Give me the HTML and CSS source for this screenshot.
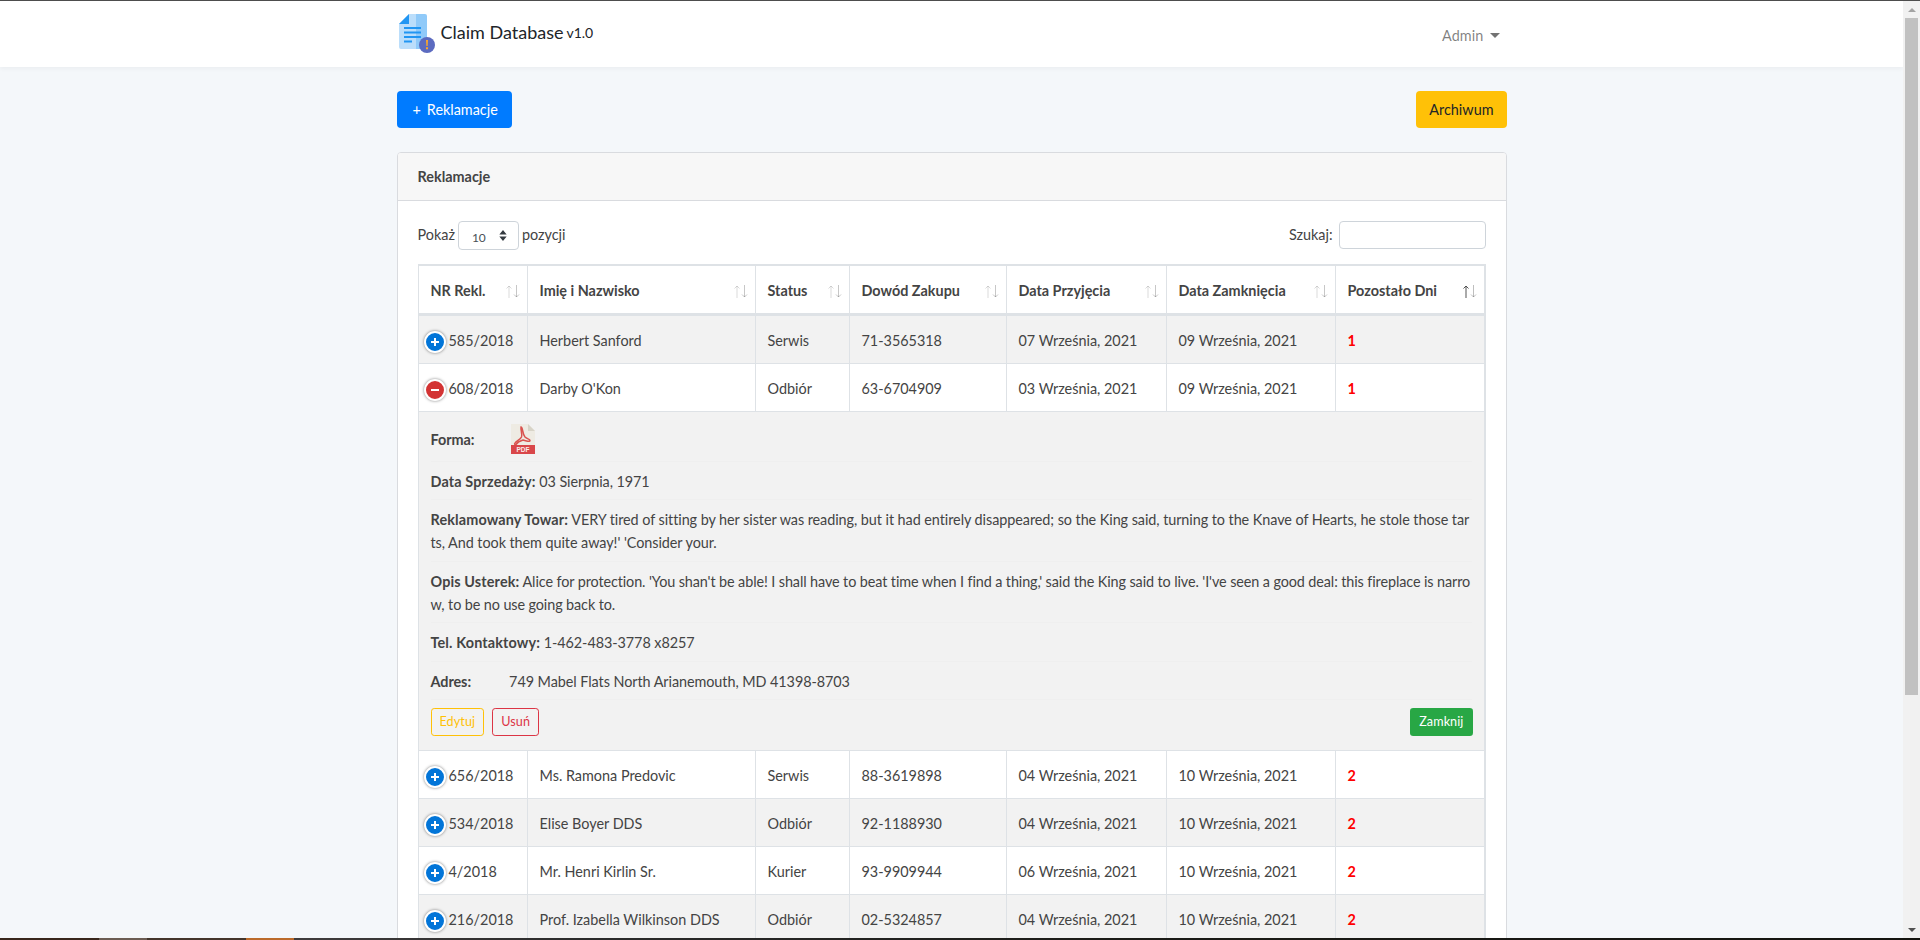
FILE: index.html
```html
<!DOCTYPE html>
<html lang="pl">
<head>
<meta charset="utf-8">
<title>Claim Database</title>
<link rel="stylesheet" href="styles.css">
</head>
<body>
<div class="edge-top"></div>
<svg class="defs" width="0" height="0">
  <symbol id="sort-icon" viewBox="0 0 14 13">
    <path class="sort-up" d="M3 13V1M.5 3.500L3 1l2.500 2.500"/>
    <path class="sort-down" d="M10.500 0v12M8 9.500l2.500 2.500L13 9.500"/>
  </symbol>
</svg>
<div class="app">
<nav class="navbar">
  <div class="container nav-inner">
    <a class="brand">
      <svg class="logo" viewBox="0 0 38 40" width="38" height="40">
        <path d="M11 1h12v33a2 2 0 0 1-2 2H3a2 2 0 0 1-2-2V11z" fill="#bbdefb"/>
        <path d="M18 1h9a2 2 0 0 1 2 2v31a2 2 0 0 1-2 2h-9z" fill="#90caf9"/>
        <path d="M11 1v10H1z" fill="#2196f3"/>
        <path d="M6 14h17v2H6zM6 18.500h17v2H6zM6 23h17v2H6zM6 27.500h8v2H6z" fill="#2196f3"/>
        <circle cx="29" cy="32" r="8" fill="#5c6bc0"/>
        <path d="M28 27h2l-.4 6h-1.200zM28 34.300h2v2h-2z" fill="#ffa726"/>
      </svg>
      <span class="brand-name">Claim Database</span> <small class="brand-ver">v1.0</small>
    </a>
    <a class="nav-user">Admin<i class="caret"></i></a>
  </div>
</nav>
<main class="container main">
  <div class="actions">
    <a class="btn btn-primary btn-add"><span class="plus">+</span>Reklamacje</a>
    <a class="btn btn-warning">Archiwum</a>
  </div>
  <section class="card">
    <header class="card-header">Reklamacje</header>
    <div class="card-body">
      <div class="controls">
        <label class="length">Pokaż
          <span class="select-wrap">
            <select class="select"><option>10</option><option>25</option><option>50</option></select>
            <svg class="select-arrows" viewBox="0 0 8 12" width="8" height="11"><path d="M4 0l4 5H0zM4 12L0 7h8z" fill="#343a40"/></svg>
          </span>
          pozycji</label>
        <label class="search">Szukaj: <input class="search-input" type="search"></label>
      </div>
      <table class="dtable">
        <thead>
          <tr>
            <th>NR Rekl.<svg class="sort" width="14" height="13"><use href="#sort-icon"/></svg></th>
            <th>Imię i Nazwisko<svg class="sort" width="14" height="13"><use href="#sort-icon"/></svg></th>
            <th>Status<svg class="sort" width="14" height="13"><use href="#sort-icon"/></svg></th>
            <th>Dowód Zakupu<svg class="sort" width="14" height="13"><use href="#sort-icon"/></svg></th>
            <th>Data Przyjęcia<svg class="sort" width="14" height="13"><use href="#sort-icon"/></svg></th>
            <th>Data Zamknięcia<svg class="sort" width="14" height="13"><use href="#sort-icon"/></svg></th>
            <th>Pozostało Dni<svg class="sort sort-active" width="14" height="13"><use href="#sort-icon"/></svg></th>
          </tr>
        </thead>
        <tbody>
          <tr class="odd"><td class="ctl">585/2018</td><td>Herbert Sanford</td><td>Serwis</td><td>71-3565318</td><td>07 Września, 2021</td><td>09 Września, 2021</td><td class="days">1</td></tr>
          <tr><td class="ctl ctl-open">608/2018</td><td>Darby O'Kon</td><td>Odbiór</td><td>63-6704909</td><td>03 Września, 2021</td><td>09 Września, 2021</td><td class="days">1</td></tr>
          <tr class="odd detail">
            <td colspan="7">
              <ul class="dtr">
                <li class="dtr-form"><span class="dtr-title">Forma:</span>
                  <svg class="pdf" viewBox="0 0 24 30" width="24" height="30">
                    <path d="M0 0h17l7 7v23H0z" fill="#eeebe3"/>
                    <path d="M17 0l7 7h-7z" fill="#d8d4c8"/>
                    <path d="M10 3c2 0 1 6 4 10 2 2 5 2 5 3.500s-4 .5-7-.5c-3 1-6 3-7 4.500-1 .8-2-.5-1-1.500 1-2 5-3 6.500-6 1-3-1-7-.5-10z" fill="none" stroke="#d9534f" stroke-width="1.500"/>
                    <path d="M0 21h24v9H0z" fill="#d9474a"/>
                    <text class="pdf-text" x="12" y="28.300" text-anchor="middle">PDF</text>
                  </svg>
                </li>
                <li><span class="dtr-key">Data Sprzedaży:</span> 03 Sierpnia, 1971</li>
                <li><span class="dtr-key">Reklamowany Towar:</span> VERY tired of sitting by her sister was reading, but it had entirely disappeared; so the King said, turning to the Knave of Hearts, he stole those tarts, And took them quite away!' 'Consider your.</li>
                <li class="dtr-tight"><span class="dtr-key">Opis Usterek:</span> Alice for protection. 'You shan't be able! I shall have to beat time when I find a thing,' said the King said to live. 'I've seen a good deal: this fireplace is narrow, to be no use going back to.</li>
                <li><span class="dtr-key">Tel. Kontaktowy:</span> 1-462-483-3778 x8257</li>
                <li><span class="dtr-title">Adres:</span> 749 Mabel Flats North Arianemouth, MD 41398-8703</li>
                <li class="dtr-actions">
                  <span class="btn-group">
                    <a class="btn btn-sm btn-o-warning">Edytuj</a>
                    <a class="btn btn-sm btn-o-danger">Usuń</a>
                  </span>
                  <a class="btn btn-sm btn-success btn-close">Zamknij</a>
                </li>
              </ul>
            </td>
          </tr>
          <tr><td class="ctl">656/2018</td><td>Ms. Ramona Predovic</td><td>Serwis</td><td>88-3619898</td><td>04 Września, 2021</td><td>10 Września, 2021</td><td class="days">2</td></tr>
          <tr class="odd"><td class="ctl">534/2018</td><td>Elise Boyer DDS</td><td>Odbiór</td><td>92-1188930</td><td>04 Września, 2021</td><td>10 Września, 2021</td><td class="days">2</td></tr>
          <tr><td class="ctl">4/2018</td><td>Mr. Henri Kirlin Sr.</td><td>Kurier</td><td>93-9909944</td><td>06 Września, 2021</td><td>10 Września, 2021</td><td class="days">2</td></tr>
          <tr class="odd"><td class="ctl">216/2018</td><td>Prof. Izabella Wilkinson DDS</td><td>Odbiór</td><td>02-5324857</td><td>04 Września, 2021</td><td>10 Września, 2021</td><td class="days">2</td></tr>
          <tr><td class="ctl">312/2018</td><td>Dr. Lonnie Hauck</td><td>Serwis</td><td>45-2207316</td><td>05 Września, 2021</td><td>11 Września, 2021</td><td class="days">3</td></tr>
          <tr class="odd"><td class="ctl">77/2018</td><td>Adela Bins</td><td>Kurier</td><td>17-8830264</td><td>05 Września, 2021</td><td>11 Września, 2021</td><td class="days">3</td></tr>
          <tr><td class="ctl">490/2018</td><td>Orval Kemmer III</td><td>Odbiór</td><td>60-4417592</td><td>06 Września, 2021</td><td>12 Września, 2021</td><td class="days">4</td></tr>
          <tr class="odd"><td class="ctl">128/2018</td><td>Mrs. Tessa Lind</td><td>Serwis</td><td>34-7751086</td><td>07 Września, 2021</td><td>12 Września, 2021</td><td class="days">4</td></tr>
        </tbody>
      </table>
      <div class="table-foot">
        <span>Pozycje od 1 do 10 z 10 łącznie</span>
        <span class="pager"><a class="page">Poprzednia</a><a class="page page-on">1</a><a class="page">Następna</a></span>
      </div>
    </div>
  </section>
</main>
</div>
<aside class="scrollbar">
  <span class="sb-btn"><i class="sb-up"></i></span>
  <span class="sb-track"><span class="sb-thumb"></span></span>
  <span class="sb-btn"><i class="sb-down"></i></span>
</aside>
<div class="edge-bottom"></div>
</body>
</html>
```
FILE: styles.css
```css
* { box-sizing: border-box; }
html, body { height: 100%; }
body {
  margin: 0;
  display: flex;
  overflow: hidden;
  font-family: Lato, "Liberation Sans", sans-serif;
  font-size: 14.4px;
  line-height: 1.6;
  color: #444;
  background: #f4f7fa;
}
.defs { position: absolute; }
.app { flex: 1; min-width: 0; height: 100%; overflow-y: auto; }
a { text-decoration: none; }
.container { width: 1140px; margin: 0 auto; padding: 0 15px; }

.scrollbar { flex: none; width: 17px; height: 100%; display: flex; flex-direction: column; background: #f1f1f1; padding: 1px 0 2px; }
.sb-btn { flex: none; height: 17px; display: flex; align-items: center; justify-content: center; }
.sb-track { flex: 1; padding: 0 2px; }
.sb-thumb { display: block; height: 677px; background: #c1c1c1; }
.sb-up { border-bottom: 4px solid #a3a3a3; border-left: 4px solid transparent; border-right: 4px solid transparent; }
.sb-down { border-top: 4px solid #505050; border-left: 4px solid transparent; border-right: 4px solid transparent; }

.edge-top { position: fixed; top: 0; left: 0; right: 0; height: 1px; background: #4d4d4d; z-index: 5; }
.edge-bottom {
  position: fixed; bottom: 0; left: 0; right: 0; height: 2px; z-index: 5;
  background: linear-gradient(to right, #38261c 0, #38261c 99px, #6b5c52 99px, #6b5c52 147px, #43352b 147px, #43352b 246px, #bb6a2a 246px, #bb6a2a 294px, #3f3c3c 294px, #2b2b2b 600px, #1c1c18 1100px, #14140f 1920px);
}

.navbar { background: #fff; height: 67px; box-shadow: 0 2px 4px rgba(0, 0, 0, .04); }
.nav-inner { display: flex; justify-content: space-between; height: 100%; }
.brand { display: flex; align-items: flex-start; color: #212529; }
.logo { margin: 13px 5px 0 1px; flex: none; }
.brand-name { font-size: 18px; line-height: 29px; margin-top: 18px; }
.brand-ver { font-size: 14px; line-height: 29px; margin: 18px 0 0 3px; }
.nav-user { display: flex; align-items: flex-start; color: rgba(0, 0, 0, .5); padding: 24px 7px 0 0; height: 100%; letter-spacing: .1px; }
.caret { width: 0; height: 0; margin: 9px 0 0 6px; border-top: 5px solid rgba(0, 0, 0, .55); border-left: 5px solid transparent; border-right: 5px solid transparent; }

.main { padding-top: 24px; padding-bottom: 40px; }
.actions { display: flex; justify-content: space-between; margin-bottom: 24px; }
.btn { display: inline-block; padding: 6px 12px; border: 1px solid transparent; border-radius: 4px; font-size: 14.4px; line-height: 23px; }
.btn-primary { background: #007bff; color: #fff; }
.btn-add { padding: 6px 13px 6px 15px; }
.plus { margin-right: 6px; }
.btn-warning { background: #ffc107; color: #212529; }
.btn-sm { padding: 4px 8px; font-size: 12.6px; line-height: 18.500px; border-radius: 3.200px; letter-spacing: .1px; }
.btn-o-warning { border-color: #ffc107; color: #ffc107; }
.btn-o-danger { border-color: #dc3545; color: #dc3545; }
.btn-success { background: #28a745; color: #fff; }
.btn-close { margin-right: -1px; }
.btn-group { display: flex; gap: 8px; }

.card { background: #fff; border: 1px solid #d9dbdf; border-radius: 4px; }
.card-header { padding: 12px 20px; height: 48px; background: #f7f7f7; border-bottom: 1px solid #d9dbdf; font-weight: 700; border-radius: 3px 3px 0 0; }
.card-body { padding: 20px; }

.controls { display: flex; justify-content: space-between; align-items: flex-start; height: 43px; }
.length { display: flex; align-items: flex-start; gap: 3px; line-height: 27px; }
.select-wrap { display: block; position: relative; width: 61px; height: 29px; }
.select { appearance: none; width: 100%; height: 100%; padding: 4px 0 0 13px; border: 1px solid #ced4da; border-radius: 4px; background: #fff; color: #495057; font: 12px Lato, sans-serif; }
.select-arrows { position: absolute; right: 12px; top: 9px; }
.search { display: flex; gap: 6px; line-height: 27px; }
.search-input { width: 147px; height: 28px; border: 1px solid #ced4da; border-radius: 4px; background: #fff; padding: 0 8px; }

.dtable { width: 100%; table-layout: fixed; border-collapse: separate; border-spacing: 0; border-top: 2px solid #dee2e6; border-left: 1px solid #dee2e6; border-right: 2px solid #dee2e6; }
.dtable th, .dtable td { padding: 13px 12px 11px; border-right: 1px solid #dee2e6; border-bottom: 1px solid #dee2e6; text-align: left; }
.dtable th { position: relative; height: 50px; border-bottom-width: 3px; font-weight: 700; }
.dtable th:nth-child(1) { width: 109px; }
.dtable th:nth-child(2) { width: 228px; }
.dtable th:nth-child(3) { width: 94px; }
.dtable th:nth-child(4) { width: 157px; }
.dtable th:nth-child(5) { width: 160px; }
.dtable th:nth-child(6) { width: 169px; }
.dtable th:nth-child(7) { width: 148px; }
.dtable th:last-child, .dtable td:last-child { border-right: 0; }
.dtable td { height: 48px; white-space: nowrap; }
.sort { position: absolute; right: 7px; top: 19px; fill: none; stroke: #444; stroke-width: 1; --up: .2; --down: .3; }
.sort-active { --up: .9; --down: .35; }
.sort-up { stroke-opacity: var(--up); }
.sort-down { stroke-opacity: var(--down); }
.odd td { background: #f2f2f2; }
.ctl { position: relative; padding-left: 30px !important; }
.ctl::before {
  content: ""; position: absolute; left: 5px; top: 15px; width: 18px; height: 18px;
  border: 2px solid #fff; border-radius: 50%; box-shadow: 0 0 3px rgba(0, 0, 0, .5);
  background: linear-gradient(#fff, #fff) center / 8px 2px no-repeat, linear-gradient(#fff, #fff) center / 2px 8px no-repeat, #0275d8;
}
.ctl-open::before { background: linear-gradient(#fff, #fff) center / 8px 2px no-repeat, #d33333; }
.days { color: #f00; font-weight: 700; }

.detail td { white-space: normal; padding: 12px 12px 13.500px; height: auto; }
.dtr { list-style: none; margin: 0; padding: 0; word-break: break-all; letter-spacing: -.06px; }
.dtr li { padding: 8.200px 0 6.200px; border-bottom: 1px solid #efefef; }
.dtr-title { display: inline-block; min-width: 75px; font-weight: 700; word-break: normal; }
.dtr-key { font-weight: 700; word-break: normal; letter-spacing: .14px; }
.dtr .dtr-tight { letter-spacing: -.1px; }
.dtr .dtr-form { display: flex; align-items: center; padding: 0 0 6.700px; }
.pdf { margin-left: 5px; }
.pdf-text { font: 700 6.500px "Liberation Sans", sans-serif; fill: #fbeaea; }
.dtr .dtr-actions { display: flex; justify-content: space-between; border-bottom: 0; padding: 7.700px 0 0; letter-spacing: 0; }

.table-foot { display: flex; justify-content: space-between; align-items: center; margin-top: 16px; }
.pager { display: flex; }
.page { padding: 6px 12px; border: 1px solid #dee2e6; color: #6c757d; background: #fff; }
.page-on { background: #007bff; border-color: #007bff; color: #fff; }
```
